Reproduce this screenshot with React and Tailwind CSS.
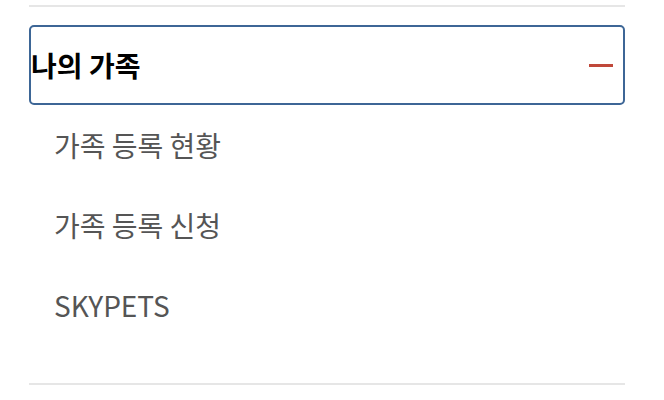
export default function App() {
  return (
    <div className="w-[664px] h-[400px] bg-white overflow-hidden" style={{ fontFamily: '"Noto Sans CJK KR", "Noto Sans", sans-serif' }}>
      <div className="ml-[29px] w-[596px] pt-[5px]">
        <div className="h-[2px] bg-[#e6e6e6]" />
        <div className="mt-[18px] h-[80px] border-2 border-[#3d6696] rounded-[5px] flex items-center justify-between pr-[10px]">
          <span className="text-[28px] font-bold text-black leading-none">나의 가족</span>
          <span className="w-[24px] h-[3px] bg-[#c0483a]" />
        </div>
        <ul className="pl-[25px]">
          <li className="h-[80px] flex items-center text-[28px] text-[#555555] leading-none">가족 등록 현황</li>
          <li className="h-[80px] flex items-center text-[28px] text-[#555555] leading-none">가족 등록 신청</li>
          <li className="h-[80px] flex items-center text-[28px] text-[#555555] leading-none">SKYPETS</li>
        </ul>
        <div className="mt-[38px] h-[2px] bg-[#e6e6e6]" />
      </div>
    </div>
  );
}
